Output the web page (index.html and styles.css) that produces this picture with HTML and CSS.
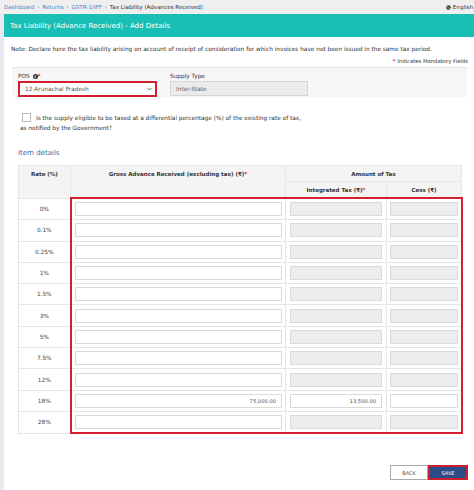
FILE: index.html
```html
<!DOCTYPE html>
<html lang="en">
<head>
  <meta charset="UTF-8" />
  <title>Tax Liability (Advance Received)</title>
  <link rel="stylesheet" href="styles.css">
</head>
<body>

  <div class="topbar">
    <div class="crumbs">
      <a href="#">Dashboard</a> <span class="sep">›</span>
      <a href="#">Returns</a> <span class="sep">›</span>
      <a href="#">GSTR-1/IFF</a> <span class="sep">›</span>
      <span class="current">Tax Liability (Advances Received)</span>
    </div>
    <div class="lang">
      <svg class="globe" viewBox="0 0 10 10"><circle cx="5" cy="5" r="4.5" fill="#333"/><path d="M2.5 3.5 L4.5 2.8 L5 4.5 L3.5 5.5 Z M5.5 5.5 L7.5 5 L7 7.5 L5.8 8 Z" fill="#fff"/></svg>
      English
    </div>
  </div>

  <div class="page">
    <div class="page-head">Tax Liability (Advance Received) - Add Details</div>

    <div class="content">
      <p class="note">Note: Declare here the tax liability arising on account of receipt of consideration for which invoices have not been issued in the same tax period.</p>
      <p class="mandatory"><span class="star">*</span> Indicates Mandatory Fields</p>

      <div class="panel">
        <div class="field">
          <label>POS <span class="info">i</span><span class="star">*</span></label>
          <div class="select">
            <span>12-Arunachal Pradesh</span>
            <svg class="chev" viewBox="0 0 8 6"><path d="M1 1.5 L4 4.5 L7 1.5" fill="none" stroke="#444" stroke-width="1.4"/></svg>
          </div>
        </div>
        <div class="field">
          <label>Supply Type</label>
          <div class="readonly">Inter-State</div>
        </div>
      </div>

      <p class="check-line"><span class="checkbox"></span>Is the supply eligible to be taxed at a differential percentage (%) of the existing rate of tax,<br>as notified by the Government?</p>

      <h3 class="section">Item details</h3>

      <table class="items">
        <colgroup>
          <col class="c-rate">
          <col class="c-gross">
          <col class="c-igst">
          <col class="c-cess">
        </colgroup>
        <thead>
          <tr>
            <th rowspan="2">Rate (%)</th>
            <th rowspan="2">Gross Advance Received (excluding tax) (₹)<span class="star">*</span></th>
            <th colspan="2">Amount of Tax</th>
          </tr>
          <tr>
            <th>Integrated Tax (₹)<span class="star">*</span></th>
            <th>Cess (₹)</th>
          </tr>
        </thead>
        <tbody>
          <tr><td>0%</td><td><div class="inp"></div></td><td><div class="inp off"></div></td><td><div class="inp off"></div></td></tr>
          <tr><td>0.1%</td><td><div class="inp"></div></td><td><div class="inp off"></div></td><td><div class="inp off"></div></td></tr>
          <tr><td>0.25%</td><td><div class="inp"></div></td><td><div class="inp off"></div></td><td><div class="inp off"></div></td></tr>
          <tr><td>1%</td><td><div class="inp"></div></td><td><div class="inp off"></div></td><td><div class="inp off"></div></td></tr>
          <tr><td>1.5%</td><td><div class="inp"></div></td><td><div class="inp off"></div></td><td><div class="inp off"></div></td></tr>
          <tr><td>3%</td><td><div class="inp"></div></td><td><div class="inp off"></div></td><td><div class="inp off"></div></td></tr>
          <tr><td>5%</td><td><div class="inp"></div></td><td><div class="inp off"></div></td><td><div class="inp off"></div></td></tr>
          <tr><td>7.5%</td><td><div class="inp"></div></td><td><div class="inp off"></div></td><td><div class="inp off"></div></td></tr>
          <tr><td>12%</td><td><div class="inp"></div></td><td><div class="inp off"></div></td><td><div class="inp off"></div></td></tr>
          <tr><td>18%</td><td><div class="inp">75,000.00</div></td><td><div class="inp">13,500.00</div></td><td><div class="inp"></div></td></tr>
          <tr><td>28%</td><td><div class="inp"></div></td><td><div class="inp off"></div></td><td><div class="inp off"></div></td></tr>
        </tbody>
      </table>

      <div class="actions">
        <button class="btn back">BACK</button>
        <button class="btn save">SAVE</button>
      </div>
    </div>
  </div>

</body>
</html>
```

FILE: styles.css
```css
body {
  margin: 0;
  background: #e9e9ef;
  font-family: "DejaVu Sans", Verdana, sans-serif;
  font-size: 5.8px;
  color: #333;
}

p {
  margin: 0;
}

.topbar {
  height: 14px;
  background: #efefef;
  display: flex;
  align-items: center;
  justify-content: space-between;
  padding: 0 1px 0 4px;
  font-size: 5.6px;
}

.crumbs a {
  color: #4a7fc7;
  text-decoration: none;
}

.crumbs .sep {
  color: #999;
  margin: 0 1px;
}

.crumbs .current {
  color: #333;
}

.lang {
  display: flex;
  align-items: center;
  gap: 2px;
  color: #333;
  white-space: nowrap;
}

.globe {
  width: 5px;
  height: 5px;
}

.page {
  margin-left: 4px;
  background: #fff;
  height: 476px;
}

.page-head {
  height: 23px;
  background: #19bfb5;
  color: #fff;
  font-size: 7px;
  display: flex;
  align-items: center;
  padding-left: 6px;
}

.content {
  padding: 8px 6px 0 7px;
}

.note {
  line-height: 8px;
  white-space: nowrap;
}

.mandatory {
  text-align: right;
  line-height: 8px;
  margin-top: 4px;
  font-size: 5.3px;
}

.star {
  color: #d3202f;
  font-weight: bold;
}

.panel {
  margin: 2px 1px 0 1px;
  height: 30px;
  box-sizing: border-box;
  background: #f7f7f7;
  border-top: 1px solid #e2e2e2;
  display: flex;
  gap: 13px;
  padding: 5px 0 0 6px;
}

.field label {
  display: block;
  line-height: 7px;
  margin-bottom: 1px;
}

.info {
  display: inline-block;
  width: 5px;
  height: 5px;
  border-radius: 50%;
  background: #333;
  color: #fff;
  font-size: 4px;
  line-height: 5px;
  text-align: center;
  font-weight: bold;
  vertical-align: 0;
  margin-left: 1px;
}

.select {
  width: 139px;
  height: 16px;
  box-sizing: border-box;
  border: 2px solid #d3202f;
  background: #fff;
  display: flex;
  align-items: center;
  justify-content: space-between;
  padding: 0 3px 0 5px;
  color: #555;
}

.chev {
  width: 5px;
  height: 4px;
}

.readonly {
  width: 138px;
  height: 15px;
  box-sizing: border-box;
  border: 1px solid #d6d6d6;
  background: #ebebeb;
  color: #666;
  display: flex;
  align-items: center;
  padding-left: 5px;
  margin-top: 1px;
}

.check-line {
  margin: 16px 0 0 9px;
  line-height: 10px;
}

.checkbox {
  display: inline-block;
  width: 7px;
  height: 7px;
  border: 1px solid #bbb;
  background: #fff;
  vertical-align: -2px;
  margin: 0 5px 0 2px;
}

.section {
  margin: 15px 0 0 7px;
  font-size: 7px;
  font-weight: normal;
  color: #3f6fa8;
  line-height: 10px;
}

.items {
  margin: 7px 0 0 7px;
  width: 443px;
  border-collapse: collapse;
  table-layout: fixed;
}

.c-rate { width: 52px; }
.c-gross { width: 215px; }
.c-igst { width: 101px; }
.c-cess { width: 75px; }

.items th,
.items td {
  border: 1px solid #e6e6e6;
  padding: 0;
}

.items th {
  background: #f4f4f4;
  font-weight: bold;
  font-size: 5.5px;
  height: 15px;
  vertical-align: middle;
  text-align: center;
  color: #333;
}

.items th[rowspan] {
  vertical-align: top;
  padding-top: 5px;
}

.items td {
  height: 20.3px;
  text-align: center;
  color: #444;
  background: #fff;
}

.items td:nth-child(2) {
  padding: 0 3px 0 3px;
  border-left: 2px solid #d3202f;
}

.items td:nth-child(3) {
  padding: 0 4px;
}

.items td:nth-child(4) {
  padding: 0 3px 0 3px;
  border-right: 2px solid #d3202f;
}

.items tbody tr:first-child td:not(:first-child) {
  border-top: 2px solid #d3202f;
}

.items tbody tr:last-child td:not(:first-child) {
  border-bottom: 2px solid #d3202f;
}

.inp {
  height: 14px;
  box-sizing: border-box;
  border: 1px solid #dadada;
  background: #fff;
  text-align: right;
  line-height: 12px;
  padding-right: 5px;
  color: #555;
  font-size: 5.2px;
}

.inp.off {
  background: #ececec;
}

.actions {
  display: flex;
  justify-content: flex-end;
  margin-top: 31px;
}

.btn {
  height: 15px;
  font-family: "DejaVu Sans", Verdana, sans-serif;
  font-size: 5px;
  padding: 0;
  cursor: pointer;
}

.back {
  width: 38px;
  background: #fff;
  border: 1px solid #aaa;
  color: #555;
}

.save {
  width: 40px;
  background: #2b4c89;
  border: 2px solid #c9202f;
  color: #fff;
}
```
